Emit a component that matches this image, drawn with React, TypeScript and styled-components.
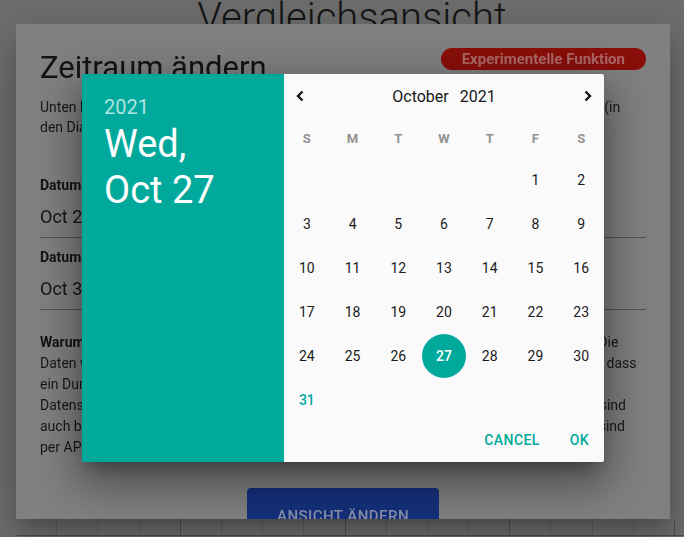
import React from 'react';
import styled, { createGlobalStyle } from 'styled-components';

const TEAL = '#00a99c';

const GlobalStyle = createGlobalStyle`
  html, body { margin: 0; padding: 0; }
  body {
    width: 684px;
    height: 537px;
    overflow: hidden;
    background: #6e6e6e;
    font-family: Roboto, "Liberation Sans", Arial, sans-serif;
  }
`;

/* ---------- page behind the dialogs ---------- */
const Page = styled.div`
  height: 537px;
  display: flex;
  flex-direction: column;
  overflow: hidden;
`;

const PageTitle = styled.h1`
  margin: -6px 0 0;
  padding-left: 20px;
  text-align: center;
  font-size: 40px;
  line-height: 48px;
  font-weight: 300;
  color: #151515;
`;

const ChartArea = styled.div`
  flex: 1;
  display: flex;
`;

const AxisColumn = styled.div`
  display: flex;
  flex-direction: column;
  gap: 29.5px;
  margin-left: -8px;
  padding-top: 88px;
`;

const AxisLabel = styled.span`
  font-size: 14px;
  line-height: 20px;
  color: #222;
`;

const GridRow = styled.div`
  display: grid;
  grid-template-columns: repeat(16, 41.2px);
  margin-left: 16px;
  height: 16px;
  border-bottom: 1px solid #4c4c4c;
  margin-bottom: 1px;
`;

const GridCell = styled.div<{ $major?: boolean }>`
  border-right: 1px solid ${(p) => (p.$major ? '#505050' : '#5e5e5e')};
`;

/* ---------- the "Zeitraum ändern" dialog ---------- */
const Dialog = styled.section`
  position: fixed;
  top: 24px;
  left: 16px;
  width: 654px;
  height: 495px;
  box-sizing: border-box;
  padding: 24px 24px 0;
  background: #808080;
  overflow: hidden;
  display: flex;
  flex-direction: column;
  box-shadow: 0 11px 15px -7px rgba(0, 0, 0, 0.2), 0 24px 38px 3px rgba(0, 0, 0, 0.14),
    0 9px 46px 8px rgba(0, 0, 0, 0.12);
`;

const DialogHeader = styled.div`
  display: flex;
  justify-content: space-between;
  align-items: flex-start;
`;

const DialogTitle = styled.h2`
  margin: 0;
  font-size: 31px;
  line-height: 40px;
  font-weight: 400;
  color: #141414;
`;

const Badge = styled.span`
  height: 22px;
  line-height: 22px;
  padding: 0 21px;
  border-radius: 11px;
  background: #8a0f0a;
  color: #ad6866;
  font-size: 15px;
  font-weight: 700;
`;

const Text = styled.p<{ $lh?: number; $mt?: number }>`
  margin: ${(p) => p.$mt ?? 0}px 0 0;
  font-size: 14px;
  line-height: ${(p) => p.$lh ?? 20}px;
  color: #181818;
  white-space: nowrap;
  b { font-weight: 700; color: #121212; }
`;

const Fields = styled.div`
  margin-top: 38px;
  display: flex;
  flex-direction: column;
  gap: 9px;
`;

const Field = styled.div`
  display: flex;
  flex-direction: column;
`;

const FieldLabel = styled.span`
  font-size: 14px;
  line-height: 20px;
  font-weight: 700;
  color: #141414;
`;

const FieldValue = styled.span`
  margin-top: 10px;
  padding-bottom: 8px;
  border-bottom: 1px solid #535353;
  font-size: 18px;
  line-height: 24px;
  color: #141414;
`;

const PrimaryButton = styled.button`
  margin: 30px auto 0;
  width: 192px;
  height: 55px;
  flex: none;
  border: none;
  border-radius: 4px;
  background: #15307b;
  color: #8a90aa;
  font-family: inherit;
  font-size: 15px;
  font-weight: 500;
  letter-spacing: 0.46px;
  text-transform: uppercase;
`;

/* ---------- the date picker ---------- */
const Picker = styled.div`
  position: fixed;
  left: 82px;
  top: 74px;
  width: 522px;
  height: 388px;
  display: flex;
  border-radius: 2px;
  overflow: hidden;
  box-shadow: 0 11px 15px -7px rgba(0, 0, 0, 0.3), 0 24px 38px 3px rgba(0, 0, 0, 0.22),
    0 9px 46px 8px rgba(0, 0, 0, 0.2);
`;

const Toolbar = styled.div`
  width: 202px;
  flex: none;
  box-sizing: border-box;
  padding: 19px 22px;
  background: ${TEAL};
  display: flex;
  flex-direction: column;
`;

const ToolbarYear = styled.span`
  font-size: 20px;
  line-height: 28px;
  color: rgba(255, 255, 255, 0.7);
`;

const ToolbarDate = styled.span`
  font-size: 38px;
  line-height: 46px;
  color: #fff;
`;

const Panel = styled.div`
  width: 320px;
  background: #fafafa;
  display: flex;
  flex-direction: column;
`;

const CalHeader = styled.div`
  height: 44px;
  padding: 0 4px;
  display: flex;
  align-items: center;
  justify-content: space-between;
`;

const ArrowButton = styled.button`
  width: 24px;
  height: 24px;
  padding: 0;
  border: none;
  background: none;
  display: flex;
  align-items: center;
  justify-content: center;
  color: #111;
`;

const MonthLabel = styled.div`
  display: flex;
  gap: 11px;
  font-size: 16px;
  color: #161616;
`;

const WeekRow = styled.div`
  height: 40px;
  display: grid;
  grid-template-columns: repeat(7, 1fr);
  align-items: center;
`;

const DayName = styled.span`
  text-align: center;
  font-size: 13px;
  font-weight: 700;
  color: #929292;
`;

const DaysGrid = styled.div`
  display: grid;
  grid-template-columns: repeat(7, 1fr);
  grid-auto-rows: 44px;
`;

const Day = styled.span<{ $selected?: boolean; $today?: boolean }>`
  display: flex;
  align-items: center;
  justify-content: center;
  font-size: 14px;
  color: ${(p) => (p.$selected ? '#fff' : p.$today ? TEAL : '#1c1c1c')};
  font-weight: ${(p) => (p.$selected || p.$today ? 500 : 400)};
  span {
    width: 44px;
    height: 44px;
    border-radius: 50%;
    display: flex;
    align-items: center;
    justify-content: center;
    background: ${(p) => (p.$selected ? TEAL : 'transparent')};
  }
`;

const Actions = styled.div`
  height: 40px;
  box-sizing: border-box;
  padding-bottom: 4px;
  display: flex;
  justify-content: flex-end;
  align-items: center;
`;

const ActionButton = styled.button`
  padding: 8px 15px;
  border: none;
  background: none;
  color: ${TEAL};
  font-family: inherit;
  font-size: 14px;
  font-weight: 500;
  letter-spacing: 0.4px;
  text-transform: uppercase;
`;

const Chevron = ({ dir }: { dir: 'left' | 'right' }) => (
  <svg width="24" height="24" viewBox="0 0 24 24" fill="none">
    <polyline
      points={dir === 'left' ? '14.5,7.5 10,12 14.5,16.5' : '9.5,7.5 14,12 9.5,16.5'}
      stroke="currentColor"
      strokeWidth="2.3"
    />
  </svg>
);

const weekDays = ['S', 'M', 'T', 'W', 'T', 'F', 'S'];
const cells: (number | null)[] = [
  ...Array(5).fill(null),
  ...Array.from({ length: 31 }, (_, i) => i + 1),
];

export default function App() {
  return (
    <>
      <GlobalStyle />
      <Page>
        <PageTitle>Vergleichsansicht</PageTitle>
        <ChartArea>
          <AxisColumn>
            {Array.from({ length: 8 }, (_, i) => (
              <AxisLabel key={i}>0</AxisLabel>
            ))}
          </AxisColumn>
        </ChartArea>
        <GridRow>
          {Array.from({ length: 16 }, (_, i) => (
            <GridCell key={i} $major={i % 4 === 3} />
          ))}
        </GridRow>
      </Page>

      <Dialog>
        <DialogHeader>
          <DialogTitle>Zeitraum ändern</DialogTitle>
          <Badge>Experimentelle Funktion</Badge>
        </DialogHeader>
        <Text $mt={9}>
          Unten können Sie den Zeitraum der Vergleichsansicht anpassen. Alle Werte werden da neu (in
          <br />
          den Diagrammen) angezeigt.
        </Text>
        <Fields>
          <Field>
            <FieldLabel>Datum von</FieldLabel>
            <FieldValue>Oct 20th</FieldValue>
          </Field>
          <Field>
            <FieldLabel>Datum bis</FieldLabel>
            <FieldValue>Oct 30th</FieldValue>
          </Field>
        </Fields>
        <Text $mt={22} $lh={21}>
          <b>Warum experimentell?</b> Die Ansicht ist für kurze Zeiträume ausgelegt und derzeit in
          Arbeit. Die
          <br />
          Daten werden für jeden Zeitraum live berechnet, was bei langen Zeitspannen oft dazu führt, dass
          <br />
          ein Durchlauf deutlich länger dauern kann. Außerdem sind für ältere Zeiträume nicht alle
          <br />
          Datensätze vorhanden, da ältere Daten automatisch archiviert werden. Archivierte Dateien sind
          <br />
          auch bei Bedarf jederzeit über unseren Support erhältlich. Auch die aktuellen Sensorwerte sind
          <br />
          per API abrufbar.
        </Text>
        <PrimaryButton>Ansicht ändern</PrimaryButton>
      </Dialog>

      <Picker>
        <Toolbar>
          <ToolbarYear>2021</ToolbarYear>
          <ToolbarDate>Wed,</ToolbarDate>
          <ToolbarDate>Oct 27</ToolbarDate>
        </Toolbar>
        <Panel>
          <CalHeader>
            <ArrowButton aria-label="previous month">
              <Chevron dir="left" />
            </ArrowButton>
            <MonthLabel>
              <span>October</span>
              <span>2021</span>
            </MonthLabel>
            <ArrowButton aria-label="next month">
              <Chevron dir="right" />
            </ArrowButton>
          </CalHeader>
          <WeekRow>
            {weekDays.map((d, i) => (
              <DayName key={i}>{d}</DayName>
            ))}
          </WeekRow>
          <DaysGrid>
            {cells.map((d, i) => (
              <Day key={i} $selected={d === 27} $today={d === 31}>
                {d !== null && <span>{d}</span>}
              </Day>
            ))}
          </DaysGrid>
          <Actions>
            <ActionButton>Cancel</ActionButton>
            <ActionButton>OK</ActionButton>
          </Actions>
        </Panel>
      </Picker>
    </>
  );
}
